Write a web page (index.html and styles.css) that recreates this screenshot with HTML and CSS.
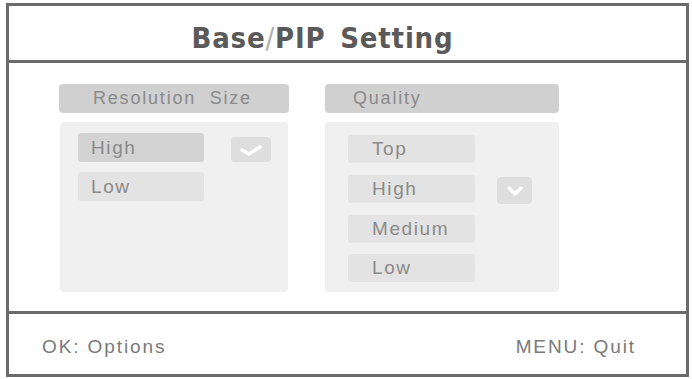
FILE: index.html
```html
<!DOCTYPE html>
<html>
<head>
<meta charset="utf-8">
<link rel="stylesheet" href="styles.css">
</head>
<body>
<div class="screen">
  <div class="title">Base<span class="slash">/</span>PIP Setting</div>
  <div class="content">
    <div class="col col-left">
      <div class="head">Resolution&nbsp; Size</div>
      <div class="panel">
        <div class="row">
          <div class="item sel">High</div>
          <div class="check"><svg width="24" height="14" viewBox="0 0 24 14"><polyline points="3,7 10,11 21,4" fill="none" stroke="#fff" stroke-width="3.5" stroke-linecap="round" stroke-linejoin="round"/></svg></div>
        </div>
        <div class="row">
          <div class="item">Low</div>
        </div>
      </div>
    </div>
    <div class="col col-right">
      <div class="head">Quality</div>
      <div class="panel">
        <div class="row"><div class="item">Top</div></div>
        <div class="row">
          <div class="item">High</div>
          <div class="check"><svg width="20" height="14" viewBox="0 0 20 14"><polyline points="4,4 10,10 16,4" fill="none" stroke="#fff" stroke-width="3.5" stroke-linecap="round" stroke-linejoin="round"/></svg></div>
        </div>
        <div class="row"><div class="item">Medium</div></div>
        <div class="row"><div class="item">Low</div></div>
      </div>
    </div>
  </div>
  <div class="footer">
    <span>OK: Options</span>
    <span>MENU: Quit</span>
  </div>
</div>
</body>
</html>
```

FILE: styles.css
```css
html, body {
  margin: 0;
  padding: 0;
  background: #fff;
}

body {
  padding: 3px 0 0 6px;
  font-family: "Liberation Sans", Arial, sans-serif;
}

.screen {
  box-sizing: border-box;
  width: 683px;
  height: 374px;
  border: 3px solid #6b6b6b;
  display: flex;
  flex-direction: column;
  background: #fff;
}

.title {
  flex: none;
  height: 57px;
  box-sizing: border-box;
  border-bottom: 3px solid #6b6b6b;
  display: flex;
  align-items: center;
  justify-content: center;
  padding-top: 10px;
  padding-right: 50px;
  font-family: "DejaVu Sans Condensed", "DejaVu Sans", sans-serif;
  font-weight: bold;
  font-size: 29px;
  letter-spacing: 0.8px;
  color: #5a5a5a;
  word-spacing: 5px;
  white-space: pre;
}

.slash {
  font-weight: normal;
  color: #b0b0b0;
}

.content {
  flex: none;
  height: 248px;
  box-sizing: border-box;
  padding: 21px 0 0 50px;
  display: flex;
  gap: 36px;
}

.col {
  display: flex;
  flex-direction: column;
  gap: 9px;
}

.col-left { width: 230px; }
.col-right { width: 234px; }

.head {
  height: 29px;
  background: #d0d0d0;
  border-radius: 4px;
  display: flex;
  align-items: center;
  font-size: 18px;
  letter-spacing: 1.8px;
  color: #8a8a8a;
}

.col-left .head { padding-left: 34px; }
.col-right .head { padding-left: 28px; }

.panel {
  height: 170px;
  background: #f0f0f0;
  border-radius: 4px;
  display: flex;
  flex-direction: column;
  box-sizing: border-box;
}

.col-left .panel {
  margin: 0 1px 0 1px;
  padding: 11px 0 0 18px;
  gap: 10px;
}

.col-right .panel {
  padding: 13px 0 0 23px;
  gap: 11px;
}

.row {
  display: flex;
  align-items: center;
}

.item {
  box-sizing: border-box;
  background: #e3e3e3;
  border-radius: 3px;
  display: flex;
  align-items: center;
  font-size: 19px;
  letter-spacing: 1.6px;
  color: #8a8a8a;
}

.col-left .item {
  width: 126px;
  height: 29px;
  padding-left: 13px;
}

.col-left .item.sel {
  background: #d3d3d3;
}

.col-right .item {
  width: 127px;
  height: 28px;
  padding-left: 24px;
}

.check {
  background: #dedede;
  border-radius: 4px;
  display: flex;
  align-items: center;
  justify-content: center;
}

.col-left .check {
  width: 40px;
  height: 25px;
  margin-left: 27px;
  margin-top: 4px;
}

.col-right .check {
  width: 35px;
  height: 27px;
  margin-left: 22px;
  margin-top: 3px;
}

.footer {
  flex: 1;
  border-top: 3px solid #6b6b6b;
  display: flex;
  align-items: center;
  justify-content: space-between;
  padding: 6px 50px 0 33px;
  font-size: 19px;
  letter-spacing: 1.9px;
  color: #7a7a7a;
}
```
